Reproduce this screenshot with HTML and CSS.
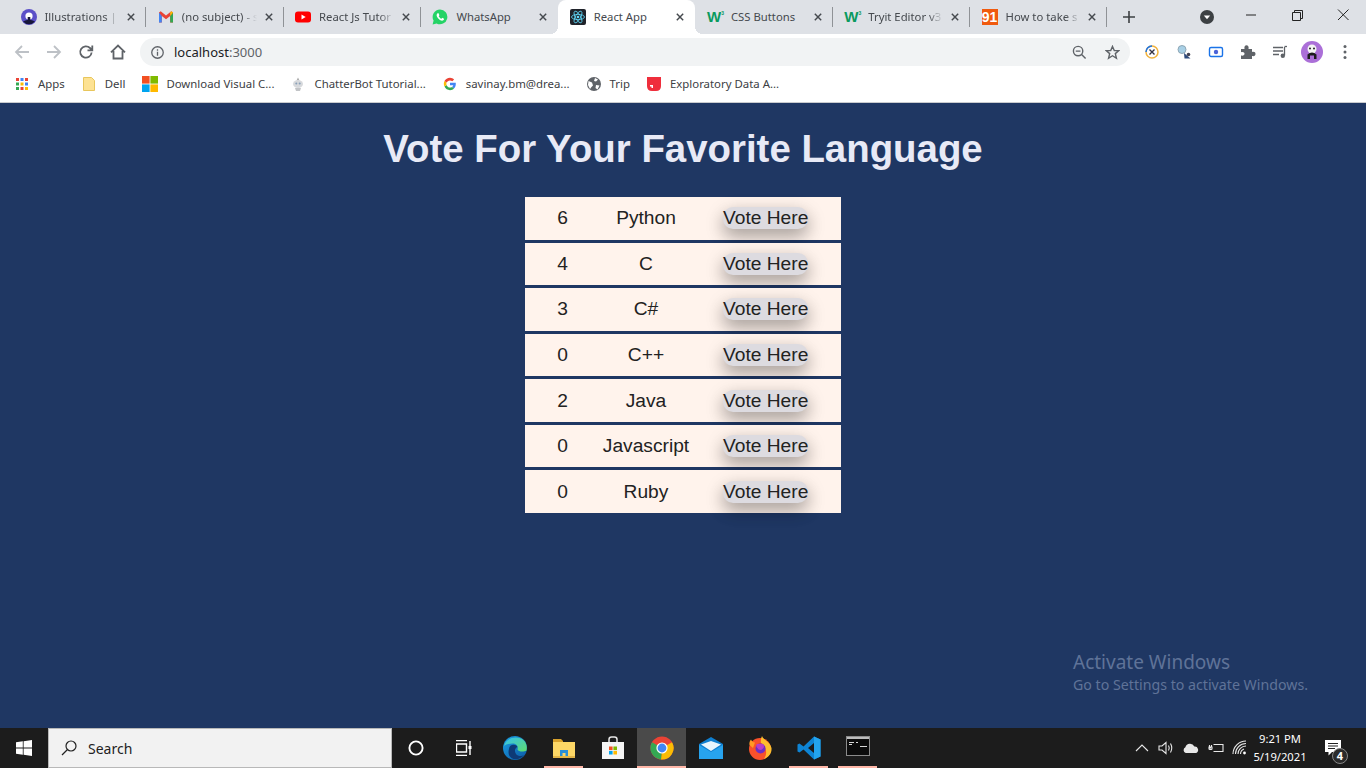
FILE: index.html
```html
<!DOCTYPE html>
<html lang="en">
<head>
    <meta charset="UTF-8">
    <title>React App</title>
    <link rel="stylesheet" href="styles.css">
</head>
<body>
<div class="screen">
    <div class="tabstrip">
        <div class="tab">
            <svg class="favicon" viewBox="0 0 16 16"><circle cx="8" cy="8" r="8" fill="#5b50c8"/><path d="M2 12.500Q8 9 14 12.500A8 8 0 0 1 2 12.500Z" fill="#17173a"/><circle cx="8" cy="7" r="3.600" fill="#fff"/><rect x="6.700" y="8" width="2.600" height="4" fill="#17173a"/></svg>
            <span class="tab-title">Illustrations | u</span>
            <svg class="tab-close" viewBox="0 0 10 10"><path d="M1 1L9 9M9 1L1 9"/></svg>
        </div>
        <div class="tab">
            <svg class="favicon" viewBox="0 0 16 16"><path d="M1 3.500V13.500H3.800V7L8 10.200L12.200 7V13.500H15V3.500L13.300 2.300L8 6.400L2.700 2.300Z" fill="#ea4335"/><path d="M1 3.500V13.500H3.800V7Z" fill="#4285f4"/><path d="M15 3.500V13.500H12.200V7Z" fill="#34a853"/><path d="M12.200 7L15 3.500L13.300 2.300L12.200 3.200Z" fill="#fbbc04"/></svg>
            <span class="tab-title">(no subject) - s</span>
            <svg class="tab-close" viewBox="0 0 10 10"><path d="M1 1L9 9M9 1L1 9"/></svg>
        </div>
        <div class="tab">
            <svg class="favicon" viewBox="0 0 16 16"><rect y="2.500" width="16" height="11" rx="3" fill="#f00"/><path d="M6.500 5.500L10.700 8L6.500 10.500Z" fill="#fff"/></svg>
            <span class="tab-title">React Js Tutor</span>
            <svg class="tab-close" viewBox="0 0 10 10"><path d="M1 1L9 9M9 1L1 9"/></svg>
        </div>
        <div class="tab tab-before-active">
            <svg class="favicon" viewBox="0 0 16 16"><path d="M8 .500A7.400 7.400 0 0 0 1.600 11.600L.600 15.500L4.600 14.500A7.400 7.400 0 1 0 8 .500Z" fill="#25d366"/><path d="M5.500 4.300C4.300 5.300 4.300 7 5.800 9C7.300 11 9.500 12 10.900 11.500C12 11 12.200 10 12 9.700L10.300 8.800L9.400 9.800C8.300 9.400 7.300 8.400 6.700 7.200L7.400 6.200L6.600 4.300Z" fill="#fff"/></svg>
            <span class="tab-title tab-title-full">WhatsApp</span>
            <svg class="tab-close" viewBox="0 0 10 10"><path d="M1 1L9 9M9 1L1 9"/></svg>
        </div>
        <div class="tab tab-active">
            <svg class="favicon" viewBox="0 0 16 16"><rect width="16" height="16" rx="2" fill="#20232a"/><g fill="none" stroke="#61dafb" stroke-width=".8"><ellipse cx="8" cy="8" rx="6.500" ry="2.600"/><ellipse cx="8" cy="8" rx="6.500" ry="2.600" transform="rotate(60 8 8)"/><ellipse cx="8" cy="8" rx="6.500" ry="2.600" transform="rotate(120 8 8)"/></g><circle cx="8" cy="8" r="1.300" fill="#61dafb"/></svg>
            <span class="tab-title tab-title-full">React App</span>
            <svg class="tab-close" viewBox="0 0 10 10"><path d="M1 1L9 9M9 1L1 9"/></svg>
        </div>
        <div class="tab">
            <span class="favicon w3-icon">W<sup>3</sup></span>
            <span class="tab-title tab-title-full">CSS Buttons</span>
            <svg class="tab-close" viewBox="0 0 10 10"><path d="M1 1L9 9M9 1L1 9"/></svg>
        </div>
        <div class="tab">
            <span class="favicon w3-icon">W<sup>3</sup></span>
            <span class="tab-title">Tryit Editor v3</span>
            <svg class="tab-close" viewBox="0 0 10 10"><path d="M1 1L9 9M9 1L1 9"/></svg>
        </div>
        <div class="tab">
            <span class="favicon icon-91">91</span>
            <span class="tab-title">How to take s</span>
            <svg class="tab-close" viewBox="0 0 10 10"><path d="M1 1L9 9M9 1L1 9"/></svg>
        </div>
        <svg class="new-tab" viewBox="0 0 12 12"><path d="M6 0V12M0 6H12"/></svg>
        <svg class="tab-search" viewBox="0 0 14 14"><circle cx="7" cy="7" r="7" fill="#3c4043"/><path d="M3.800 5.600H10.200L7 9.300Z" fill="#fff"/></svg>
        <div class="window-controls">
            <svg viewBox="0 0 46 30"><path d="M18 15H28"/></svg>
            <svg viewBox="0 0 46 30"><path d="M18.500 12.500H26.500V20.500H18.500ZM20.500 12.500V10.500H28.500V18.500H26.500"/></svg>
            <svg viewBox="0 0 46 30"><path d="M18 9.500L28.500 20M28.500 9.500L18 20"/></svg>
        </div>
    </div>

    <div class="toolbar">
        <svg class="nav-icon nav-disabled" viewBox="0 0 16 16"><path d="M15 8H2M8 2L2 8L8 14"/></svg>
        <svg class="nav-icon nav-disabled" viewBox="0 0 16 16"><path d="M1 8H14M8 2L14 8L8 14"/></svg>
        <svg class="nav-icon" viewBox="0 0 16 16"><path d="M13.600 8.500A5.700 5.700 0 1 1 12 4L14 6M14.300 1.500V6.300H9.500"/></svg>
        <svg class="nav-icon" viewBox="0 0 16 16"><path d="M1 8.300L8 1.500L15 8.300M3.500 7V14.500H12.500V7"/></svg>
        <div class="omnibox">
            <svg class="info-icon" viewBox="0 0 14 14"><circle cx="7" cy="7" r="6.200"/><path d="M7 6.200V10.500M7 3.500V5"/></svg>
            <span class="url">localhost<span class="url-port">:3000</span></span>
            <svg class="omni-icon omni-zoom" viewBox="0 0 16 16"><circle cx="6.500" cy="6.500" r="5"/><path d="M10.200 10.200L14.500 14.500M4 6.500H9"/></svg>
            <svg class="omni-icon" viewBox="0 0 16 16"><path d="M8 1.500L9.900 6H14.800L11 9.200L12.200 14.200L8 11.500L3.800 14.200L5 9.200L1.200 6H6.100Z"/></svg>
        </div>
        <div class="extensions">
            <svg class="ext-icon" viewBox="0 0 16 16"><circle cx="8" cy="8" r="6" fill="none" stroke="#f2b33d" stroke-width="1.500"/><path d="M2 8A6 6 0 0 1 8 2" fill="none" stroke="#1a73e8" stroke-width="1.500"/><path d="M5.500 10.500L10.500 5.500M5.500 5.500L10.500 10.500" stroke="#334" stroke-width="1.400"/></svg>
            <svg class="ext-icon" viewBox="0 0 16 16"><circle cx="6" cy="5.500" r="4" fill="#a8d0e6" stroke="#8fa6b5"/><path d="M8 9L14.500 14.500H8.500Z" fill="#2f4b7c"/><circle cx="12.500" cy="10.500" r="1.800" fill="#445"/></svg>
            <svg class="ext-icon" viewBox="0 0 16 16"><rect x="1.500" y="3.500" width="13" height="9" rx="1.500" fill="none" stroke="#1a73e8" stroke-width="1.400"/><circle cx="8" cy="8" r="2.200" fill="#4b63d8"/></svg>
            <svg class="ext-icon" viewBox="0 0 16 16"><path d="M1 5H4.500C4 2.500 5 1.300 6.500 1.300S9 2.500 8.500 5H12V8C14.500 7.500 15.500 8.500 15.500 10S14.500 12.500 12 12V15H1V11.500C3.500 12 4.500 11 4.500 9.800S3.500 7.700 1 8.200Z" fill="#5f6368"/></svg>
            <svg class="ext-icon" viewBox="0 0 16 16"><path d="M1 3.500H11M1 7H11M1 10.500H7" stroke="#5f6368" stroke-width="1.300"/><path d="M12.500 3V11.500" stroke="#5f6368" stroke-width="1.300"/><path d="M12.500 2.500H15" stroke="#5f6368" stroke-width="1.300"/><circle cx="10.800" cy="11.800" r="2.200" fill="#5f6368"/></svg>
            <svg class="avatar" viewBox="0 0 22 22"><circle cx="11" cy="11" r="11" fill="#ab6fd8"/><circle cx="11" cy="8" r="4.500" fill="#f4f4f4"/><circle cx="9" cy="7.500" r="1" fill="#222"/><circle cx="13" cy="7.500" r="1" fill="#222"/><path d="M6.500 18V13.500Q11 9.500 15.500 13.500V18H13V14.500H9V18Z" fill="#1d1d1d"/></svg>
            <svg class="menu-dots" viewBox="0 0 4 16"><circle cx="2" cy="2.500" r="1.500"/><circle cx="2" cy="8" r="1.500"/><circle cx="2" cy="13.500" r="1.500"/></svg>
        </div>
    </div>

    <div class="bookmarks">
        <div class="bookmark">
            <svg class="bm-icon" viewBox="0 0 14 14"><path d="M1 1h3v3H1z" fill="#ea4335"/><path d="M5.500 1h3v3h-3z" fill="#4285f4"/><path d="M10 1h3v3h-3z" fill="#ea4335"/><path d="M1 5.500h3v3H1z" fill="#34a853"/><path d="M5.500 5.500h3v3h-3z" fill="#fbbc04"/><path d="M10 5.500h3v3h-3z" fill="#4285f4"/><path d="M1 10h3v3H1z" fill="#34a853"/><path d="M5.500 10h3v3h-3z" fill="#ea4335"/><path d="M10 10h3v3h-3z" fill="#fbbc04"/></svg>
            <span>Apps</span>
        </div>
        <div class="bookmark">
            <svg class="bm-icon" viewBox="0 0 14 14"><path d="M1.500 .500H9.500L12.500 3.500V13.500H1.500Z" fill="#fde293" stroke="#e8c65c"/></svg>
            <span>Dell</span>
        </div>
        <div class="bookmark">
            <svg class="bm-icon bm-wide" viewBox="0 0 16 16"><path d="M0 0h7.600v7.600H0z" fill="#f25022"/><path d="M8.400 0H16v7.600H8.400z" fill="#7fba00"/><path d="M0 8.400h7.600V16H0z" fill="#00a4ef"/><path d="M8.400 8.400H16V16H8.400z" fill="#ffb900"/></svg>
            <span>Download Visual C...</span>
        </div>
        <div class="bookmark">
            <svg class="bm-icon" viewBox="0 0 14 14"><path d="M7 .500L8.500 3.500H5.500Z" fill="#aaa"/><ellipse cx="7" cy="7" rx="5" ry="4" fill="#d7d9dc"/><circle cx="5.300" cy="6.500" r="1" fill="#8aa0b8"/><circle cx="8.700" cy="6.500" r="1" fill="#8aa0b8"/><path d="M4 11H10L9 14H5Z" fill="#c2c4c7"/></svg>
            <span>ChatterBot Tutorial...</span>
        </div>
        <div class="bookmark">
            <svg class="bm-icon" viewBox="0 0 14 14"><path d="M12.800 7.100C12.800 6.600 12.800 6.200 12.700 5.800H7V8.200H10.300C10.100 9 9.700 9.600 9 10L11 11.600C12.200 10.500 12.800 9 12.800 7.100Z" fill="#4285f4"/><path d="M7 13.200C8.700 13.200 10 12.600 11 11.600L9 10C8.500 10.400 7.800 10.600 7 10.600C5.400 10.600 4 9.500 3.500 8L1.500 9.600C2.500 11.800 4.600 13.200 7 13.200Z" fill="#34a853"/><path d="M3.500 8C3.300 7 3.300 6.200 3.500 5.600L1.500 4C.6 5.700.6 7.900 1.500 9.600Z" fill="#fbbc04"/><path d="M7 3.400C7.900 3.400 8.700 3.700 9.300 4.300L11.100 2.500C10 1.500 8.700 .800 7 .800C4.600 .800 2.500 2.200 1.500 4L3.500 5.600C4 4.500 5.400 3.400 7 3.400Z" fill="#ea4335"/></svg>
            <span>savinay.bm@drea...</span>
        </div>
        <div class="bookmark">
            <svg class="bm-icon" viewBox="0 0 14 14"><circle cx="7" cy="7" r="7" fill="#5f6368"/><path d="M1.500 4L5 5.500L6 8.500L4.500 10L3 12L1 8ZM8 1L11 2.500L9 4.500L7 4ZM9 8L12.500 8.500L10.500 12.500L8.500 11Z" fill="#fff"/></svg>
            <span>Trip</span>
        </div>
        <div class="bookmark">
            <svg class="bm-icon" viewBox="0 0 14 14"><path d="M0 0H14V9Q14 14 9 14H5Q0 14 0 9Z" fill="#ef2e3c"/><path d="M3 8H6V11H4.500V9.500H3Z" fill="#fff"/></svg>
            <span>Exploratory Data A...</span>
        </div>
    </div>

    <main class="page">
        <h1 class="vote-title">Vote For Your Favorite Language</h1>
        <div class="vote-list">
            <div class="vote-row">
                <span class="vote-count">6</span>
                <span class="vote-lang">Python</span>
                <span class="vote-cell"><button class="vote-btn">Vote Here</button></span>
            </div>
            <div class="vote-row">
                <span class="vote-count">4</span>
                <span class="vote-lang">C</span>
                <span class="vote-cell"><button class="vote-btn">Vote Here</button></span>
            </div>
            <div class="vote-row">
                <span class="vote-count">3</span>
                <span class="vote-lang">C#</span>
                <span class="vote-cell"><button class="vote-btn">Vote Here</button></span>
            </div>
            <div class="vote-row">
                <span class="vote-count">0</span>
                <span class="vote-lang">C++</span>
                <span class="vote-cell"><button class="vote-btn">Vote Here</button></span>
            </div>
            <div class="vote-row">
                <span class="vote-count">2</span>
                <span class="vote-lang">Java</span>
                <span class="vote-cell"><button class="vote-btn">Vote Here</button></span>
            </div>
            <div class="vote-row">
                <span class="vote-count">0</span>
                <span class="vote-lang">Javascript</span>
                <span class="vote-cell"><button class="vote-btn">Vote Here</button></span>
            </div>
            <div class="vote-row">
                <span class="vote-count">0</span>
                <span class="vote-lang">Ruby</span>
                <span class="vote-cell"><button class="vote-btn">Vote Here</button></span>
            </div>
        </div>
        <div class="activate">
            <div class="activate-head">Activate Windows</div>
            <div class="activate-sub">Go to Settings to activate Windows.</div>
        </div>
    </main>

    <footer class="taskbar">
        <div class="task-btn">
            <svg class="win-logo" viewBox="0 0 16 16"><path d="M0 2.300L6.800 1.300V7.500H0ZM7.600 1.200L16 0V7.500H7.600ZM0 8.400H6.800V14.700L0 13.700ZM7.600 8.400H16V16L7.600 14.800Z"/></svg>
        </div>
        <div class="task-search">
            <svg class="search-glass" viewBox="0 0 16 16"><circle cx="10" cy="6" r="5"/><path d="M6.500 9.500L1 15"/></svg>
            <span>Search</span>
        </div>
        <div class="task-btn task-app">
            <svg class="task-glyph task-cortana" viewBox="0 0 16 16"><circle cx="8" cy="8" r="6.600"/></svg>
        </div>
        <div class="task-btn task-app">
            <svg class="task-glyph task-view" viewBox="0 0 16 16"><path d="M0 .500H11M0 15.500H11M.500 4H10.500V12H.500ZM14 1V15"/><rect x="12.500" y="6" width="3" height="3" fill="#fff" stroke="none"/></svg>
        </div>
        <div class="task-btn task-app">
            <svg class="app-icon" viewBox="0 0 24 24"><defs><linearGradient id="edgeBlue" x1="0" y1="0" x2="1" y2="1"><stop offset="0" stop-color="#1b9de2"/><stop offset="1" stop-color="#0c59a4"/></linearGradient><linearGradient id="edgeGreen" x1="0" y1="0" x2="1" y2="1"><stop offset="0" stop-color="#35c1f1"/><stop offset="1" stop-color="#5fdc6c"/></linearGradient></defs><circle cx="12" cy="12" r="12" fill="url(#edgeBlue)"/><path d="M1 10C3 2 12 0 18 2.500C23 5 24.500 10 23.500 14.500C21 16 15.500 16 14.500 13.500C15.500 10.500 13.500 7.500 9.500 7.500C5.500 7.500 2.500 8.500 1 10Z" fill="url(#edgeGreen)"/><path d="M6 13C6 8 13 7.500 14.500 11C12 12 11 15 13 18C15 20.500 19 20.500 21 19C18 23 12 24.500 8.500 22C5.500 20 5 16 6 13Z" fill="#0e3a76"/></svg>
        </div>
        <div class="task-btn task-app task-open">
            <svg class="app-icon" viewBox="0 0 24 24"><path d="M1 3H9L11 5V8H1Z" fill="#d9a22c"/><rect x="1" y="6" width="22" height="16" fill="#fdd766"/><path d="M8 22V14H16V22H13.500V17H10.500V22Z" fill="#2a8fd8"/><rect x="1" y="20" width="22" height="2" fill="#e3b547"/></svg>
        </div>
        <div class="task-btn task-app">
            <svg class="app-icon" viewBox="0 0 24 24"><path d="M8 7V3.500Q8 1 10.500 1H13.500Q16 1 16 3.500V7" fill="none" stroke="#e6e6e6" stroke-width="1.500"/><rect x="1" y="6" width="22" height="17" fill="#f5f5f5"/><path d="M8 10.500h3.600v3.600H8z" fill="#f25022"/><path d="M12.400 10.500H16v3.600h-3.600z" fill="#7fba00"/><path d="M8 14.900h3.600v3.600H8z" fill="#00a4ef"/><path d="M12.400 14.900H16v3.600h-3.600z" fill="#ffb900"/></svg>
        </div>
        <div class="task-btn task-app task-current task-open">
            <svg class="app-icon" viewBox="0 0 24 24"><circle cx="12" cy="12" r="11.500" fill="#ea4335"/><path d="M12 12L22 6.200A11.500 11.500 0 0 1 11 23.500Z" fill="#fbbc04"/><path d="M12 12L11 23.500A11.500 11.500 0 0 1 2 6.200Z" fill="#34a853"/><circle cx="12" cy="12" r="5.600" fill="#fff"/><circle cx="12" cy="12" r="4.400" fill="#4285f4"/></svg>
        </div>
        <div class="task-btn task-app">
            <svg class="app-icon" viewBox="0 0 24 24"><path d="M0 8L12 1L24 8V23H0Z" fill="#0f7fd0"/><path d="M0 9L12 16L24 9V23H0Z" fill="#27a3ee"/><path d="M2 8.500L12 5L22 8.500L12 15Z" fill="#e8f5fd"/></svg>
        </div>
        <div class="task-btn task-app">
            <svg class="app-icon" viewBox="0 0 24 24"><circle cx="12" cy="13" r="11" fill="#f9512b"/><path d="M14 0C15 4 22 5 23.500 12C24 17 21 21 16 23C20 17 18 10 13 7C12.500 4.500 13 2 14 0Z" fill="#ffbd2e"/><path d="M1.500 9C1 6.500 2 4.500 3 3.500C3.500 5 5 6.500 7 6.500L5 12Z" fill="#ff9a26"/><circle cx="12.500" cy="12.500" r="5" fill="#6d2fc4"/><path d="M9 8H15C17 10 16 13 13 14C11 14 10 13 9.500 12C8 11 8 9 9 8Z" fill="#b93cc9"/></svg>
        </div>
        <div class="task-btn task-app task-open">
            <svg class="app-icon" viewBox="0 0 24 24"><path d="M17 0.500L23.500 3.500V20.500L17 23.500L6.500 13.500L2.500 16.500L.5 15.500V8.500L2.500 7.500L6.500 10.500ZM17 7L11 12L17 17Z" fill="#0e84d4"/><path d="M17 .500L23.500 3.500V20.500L17 23.500Z" fill="#23a4ee"/></svg>
        </div>
        <div class="task-btn task-app task-open">
            <svg class="app-icon" viewBox="0 0 24 24"><rect x=".5" y=".5" width="23" height="19" fill="#0c0c0c" stroke="#8b8b8b"/><rect x="1" y="1" width="22" height="2" fill="#bcbcbc"/><path d="M3 6.500H8M3 8.500H6M10 6.500H12M14 10.500H21" stroke="#d8d8d8" stroke-width="1.200"/></svg>
        </div>
        <div class="tray">
            <svg class="tray-icon" viewBox="0 0 16 16"><path d="M2 11L8 5L14 11"/></svg>
            <svg class="tray-icon" viewBox="0 0 16 16"><path d="M1 6H4L8 2.500V13.500L4 10H1ZM10.500 5.500Q12 8 10.500 10.500M12.500 3.500Q15 8 12.500 12.500"/></svg>
            <svg class="tray-icon tray-cloud" viewBox="0 0 24 14"><path d="M5 13.500A4 4 0 0 1 4.500 6A6.500 6.500 0 0 1 16.500 5A4.500 4.500 0 0 1 19 13.500Z" fill="#e8e8e8" stroke="none"/></svg>
            <svg class="tray-icon" viewBox="0 0 16 16"><path d="M5.500 4.500H15V11.500H5.500M15 6.500V9.500M1 8H3M1.500 5V7M3.500 5V7M1 7H4V9Q2.500 10 1 9Z"/></svg>
            <svg class="tray-icon" viewBox="0 0 16 16"><path d="M1 14A13 13 0 0 1 14 1M3.500 14A10.500 10.500 0 0 1 14 3.500M6 14A8 8 0 0 1 14 6M8.500 14A5.500 5.500 0 0 1 12 9"/><circle cx="12.500" cy="13" r="1.400" fill="#fff" stroke="none"/></svg>
            <div class="clock">
                <div>9:21 PM</div>
                <div>5/19/2021</div>
            </div>
            <div class="notify">
                <svg class="notify-icon" viewBox="0 0 16 16"><path d="M0 0H16V12H7L3.500 15.500V12H0Z" fill="#fff"/><path d="M3 3.500H13M3 6H13M3 8.500H10" stroke="#222" stroke-width="1"/></svg>
                <span class="notify-badge">4</span>
            </div>
        </div>
    </footer>
</div>
</body>
</html>
```

FILE: styles.css
```css
* {
    box-sizing: border-box;
}
html, body {
    margin: 0;
    height: 100%;
    overflow: hidden;
}
body {
    font-family: "Noto Sans", "Open Sans", sans-serif;
}
svg {
    display: block;
    flex: none;
}
.screen {
    display: flex;
    flex-direction: column;
    width: 1366px;
    height: 768px;
}

/* tabs */
.tabstrip {
    display: flex;
    align-items: center;
    flex: none;
    height: 34px;
    padding-left: 9px;
    background: #dee1e6;
}
.tab {
    display: flex;
    align-items: center;
    position: relative;
    flex: none;
    width: 137.3px;
    height: 34px;
    padding: 0 11px 0 11.5px;
    font-size: 11.3px;
    color: #45494e;
}
.tab::after {
    content: "";
    position: absolute;
    right: 0;
    top: 7px;
    width: 1px;
    height: 20px;
    background: #8f9296;
}
.tab-before-active::after {
    display: none;
}
.tab-active {
    background: #fff;
    border-radius: 8px 8px 0 0;
}
.tab-active::before, .tab-active::after {
    content: "";
    position: absolute;
    top: auto;
    bottom: 0;
    width: 8px;
    height: 8px;
}
.tab-active::before {
    left: -8px;
    background: radial-gradient(circle at 0 0, transparent 8px, #fff 8px);
}
.tab-active::after {
    right: -8px;
    background: radial-gradient(circle at 100% 0, transparent 8px, #fff 8px);
}
.favicon {
    width: 16px;
    height: 16px;
    flex: none;
}
.w3-icon {
    font: 900 15px/16px "Liberation Sans", sans-serif;
    color: #0a9a5e;
    letter-spacing: -1px;
}
.w3-icon sup {
    font-size: 5px;
    line-height: 0;
    vertical-align: 7px;
    margin-left: 1px;
}
.icon-91 {
    background: #f05a0e;
    color: #fff;
    font: 700 14px/16px "Liberation Sans", sans-serif;
    text-align: center;
}
.tab-title {
    flex: 1;
    min-width: 0;
    margin: 0 8px 2px;
    white-space: nowrap;
    -webkit-mask-image: linear-gradient(to right, #000 80%, transparent 100%);
    mask-image: linear-gradient(to right, #000 80%, transparent 100%);
}
.tab-title-full {
    -webkit-mask-image: none;
    mask-image: none;
}
.tab-close {
    width: 8px;
    height: 8px;
    fill: none;
    stroke: #45494e;
    stroke-width: 1.8;
}
.new-tab {
    width: 12px;
    height: 12px;
    margin-left: 16px;
    fill: none;
    stroke: #3c4043;
    stroke-width: 1.6;
}
.tab-search {
    width: 14px;
    height: 14px;
    margin-left: 65px;
}
.window-controls {
    display: flex;
    margin-left: 14px;
    align-self: flex-start;
}
.window-controls svg {
    width: 46px;
    height: 30px;
    fill: none;
    stroke: #222;
    stroke-width: 1;
}

/* toolbar */
.toolbar {
    display: flex;
    align-items: center;
    flex: none;
    height: 34px;
    padding: 2px 0 0 14px;
    background: #fff;
}
.nav-icon {
    width: 16px;
    height: 16px;
    margin-right: 16px;
    fill: none;
    stroke: #5f6368;
    stroke-width: 1.8;
}
.nav-disabled {
    stroke: #bdc1c6;
}
.omnibox {
    display: flex;
    align-items: center;
    width: 990px;
    height: 28px;
    margin-left: -2px;
    padding: 0 10px 0 11px;
    border-radius: 14px;
    background: #f1f3f4;
}
.info-icon {
    width: 13px;
    height: 13px;
    fill: none;
    stroke: #5f6368;
    stroke-width: 1.400;
}
.url {
    flex: 1;
    margin-left: 10px;
    font-size: 13px;
    color: #202124;
}
.url-port {
    color: #5f6368;
}
.omni-icon {
    width: 15px;
    height: 15px;
    fill: none;
    stroke: #5f6368;
    stroke-width: 1.500;
}
.omni-zoom {
    margin-right: 18px;
}
.extensions {
    display: flex;
    align-items: center;
    margin-left: 14px;
}
.ext-icon {
    width: 16px;
    height: 16px;
    margin-right: 16px;
}
.avatar {
    width: 22px;
    height: 22px;
    margin-left: -3px;
}
.menu-dots {
    width: 4px;
    height: 16px;
    margin-left: 20px;
    fill: #5f6368;
}

/* bookmarks */
.bookmarks {
    display: flex;
    align-items: center;
    flex: none;
    gap: 17px;
    height: 35px;
    padding: 0 0 3px 15px;
    background: #fff;
    border-bottom: 1px solid #c9cbce;
    font-size: 11.4px;
    color: #3c4043;
}
.bookmark {
    display: flex;
    align-items: center;
    gap: 9px;
    white-space: nowrap;
}
.bm-icon {
    width: 14px;
    height: 14px;
}
.bm-wide {
    width: 16px;
    height: 16px;
    margin-right: -1px;
}

/* the react app */
.page {
    position: relative;
    flex: 1;
    min-height: 0;
    background: #1f3763;
    font-family: "Liberation Sans", Arial, sans-serif;
}
.vote-title {
    margin: 0;
    padding-top: 23px;
    text-align: center;
    font-size: 38.4px;
    line-height: 46px;
    font-weight: 700;
    color: #e8eaf6;
}
.vote-list {
    display: flex;
    flex-direction: column;
    gap: 3px;
    width: 316px;
    margin: 25px 0 0 525px;
}
.vote-row {
    display: grid;
    grid-template-columns: 75px 92px 149px;
    align-items: center;
    height: 42.57px;
    background: #fff3ec;
    font-size: 19.2px;
    color: #222;
    text-align: center;
}
.vote-cell {
    display: flex;
    padding-left: 31px;
}
.vote-btn {
    height: 22px;
    width: 85px;
    padding: 0;
    border: 0;
    border-radius: 10px;
    background: #dddbe0;
    font: inherit;
    line-height: 22px;
    color: #222;
    box-shadow: 0 8px 16px 0 rgba(0, 0, 0, .2), 0 6px 20px 0 rgba(0, 0, 0, .19);
    white-space: nowrap;
}
.activate {
    position: absolute;
    left: 1073px;
    top: 546px;
    font-family: "Noto Sans", sans-serif;
    color: #5f7398;
}
.activate-head {
    font-size: 19px;
    line-height: 26px;
}
.activate-sub {
    font-size: 14.2px;
    line-height: 20px;
}

/* taskbar */
.taskbar {
    display: flex;
    flex: none;
    height: 40px;
    background: #1c1c1c;
}
.task-btn {
    display: flex;
    align-items: center;
    justify-content: center;
    position: relative;
    flex: none;
    width: 48px;
    height: 40px;
}
.task-app {
    width: 49px;
}
.task-current {
    background: #4a4a4a;
}
.task-open::after {
    content: "";
    position: absolute;
    left: 5px;
    right: 5px;
    bottom: 0;
    height: 2px;
    background: #ffb7a8;
}
.task-current::after {
    left: 0;
    right: 0;
}
.win-logo {
    width: 16px;
    height: 16px;
    fill: #fff;
}
.task-search {
    display: flex;
    align-items: center;
    gap: 11px;
    width: 344px;
    padding-left: 12px;
    background: #f2f2f2;
    border: 1px solid #b8b8b8;
    font-size: 14px;
    color: #222;
}
.search-glass {
    width: 16px;
    height: 16px;
    fill: none;
    stroke: #222;
    stroke-width: 1.200;
}
.task-glyph {
    width: 16px;
    height: 16px;
    fill: none;
    stroke: #fff;
    stroke-width: 1.400;
}
.task-cortana {
    stroke-width: 1.900;
    margin-right: 2px;
}
.task-view {
    margin-right: 3px;
}
.app-icon {
    width: 24px;
    height: 24px;
}
.tray {
    display: flex;
    align-items: center;
    justify-content: flex-end;
    flex: 1;
    padding-right: 25px;
    color: #fff;
}
.tray-icon {
    width: 16px;
    height: 16px;
    margin-right: 8px;
    fill: none;
    stroke: #e8e8e8;
    stroke-width: 1.100;
}
.tray-cloud {
    width: 18px;
    height: 14px;
}
.clock {
    width: 60px;
    margin-left: -6px;
    font-size: 11.2px;
    line-height: 18px;
    text-align: center;
}
.notify {
    position: relative;
    margin-left: 15px;
}
.notify-icon {
    width: 16px;
    height: 16px;
}
.notify-badge {
    position: absolute;
    left: 7px;
    top: 8px;
    width: 16px;
    height: 16px;
    border: 1px solid #888;
    border-radius: 50%;
    background: #2b2b2b;
    font: 700 11px/14px "Noto Sans", sans-serif;
    text-align: center;
}
```
